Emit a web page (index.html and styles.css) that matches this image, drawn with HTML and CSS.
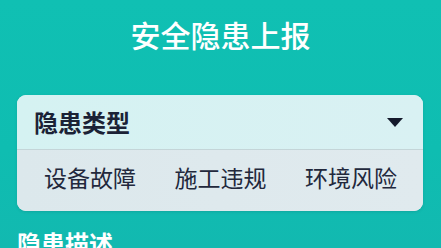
FILE: index.html
```html
<!DOCTYPE html>
<html>
<head>
	<title>安全隐患上报</title>
	<link rel="stylesheet" href="styles.css">
</head>
<body>
<h1 class="title">安全隐患上报</h1>

<div class="card">
	<div class="select-head">
		<span class="select-label">隐患类型</span>
		<span class="caret"></span>
	</div>
	<div class="options">
		<span class="option">设备故障</span>
		<span class="option">施工违规</span>
		<span class="option">环境风险</span>
	</div>
</div>

<h2 class="section">隐患描述</h2>
</body>
</html>
```

FILE: styles.css
```css
html, body {
	margin: 0;
	height: 100%;
}

body {
	background: linear-gradient(180deg, #10c0b3 0%, #0fbdb1 60%, #12b9b0 100%);
	font-family: "Noto Sans CJK SC", "Noto Sans", sans-serif;
	padding: 0 18px;
	overflow: hidden;
}

.title {
	margin: 0;
	padding-top: 14px;
	height: 40px;
	line-height: 40px;
	font-size: 30px;
	font-weight: 500;
	color: #fff;
	text-align: center;
}

.card {
	margin-top: 41px;
	margin-left: -1px;
	border-radius: 9px;
	overflow: hidden;
	background: #dfe9ed;
	box-shadow: 0 1px 3px rgba(0, 60, 60, 0.15);
}

.select-head {
	display: flex;
	align-items: center;
	justify-content: space-between;
	height: 54px;
	padding: 0 20px 0 17px;
	background: linear-gradient(90deg, #d5f2f2, #d9f1f3);
	border-bottom: 1px solid #c4d5d8;
}

.select-label {
	font-size: 24px;
	font-weight: 700;
	color: #1b2236;
	line-height: 1;
}

.caret {
	width: 0;
	height: 0;
	border-left: 8px solid transparent;
	border-right: 8px solid transparent;
	border-top: 9px solid #141a2c;
}

.options {
	display: flex;
	justify-content: space-between;
	align-items: center;
	height: 61px;
	padding: 0 26px 0 27px;
	background: linear-gradient(90deg, #dce8ec, #e0eaee);
}

.option {
	font-size: 23px;
	color: #22283c;
	line-height: 1;
	padding-bottom: 6px;
}

.section {
	margin: 17px 0 0 -1px;
	font-size: 24px;
	font-weight: 700;
	color: #fff;
	line-height: 30px;
}
```
